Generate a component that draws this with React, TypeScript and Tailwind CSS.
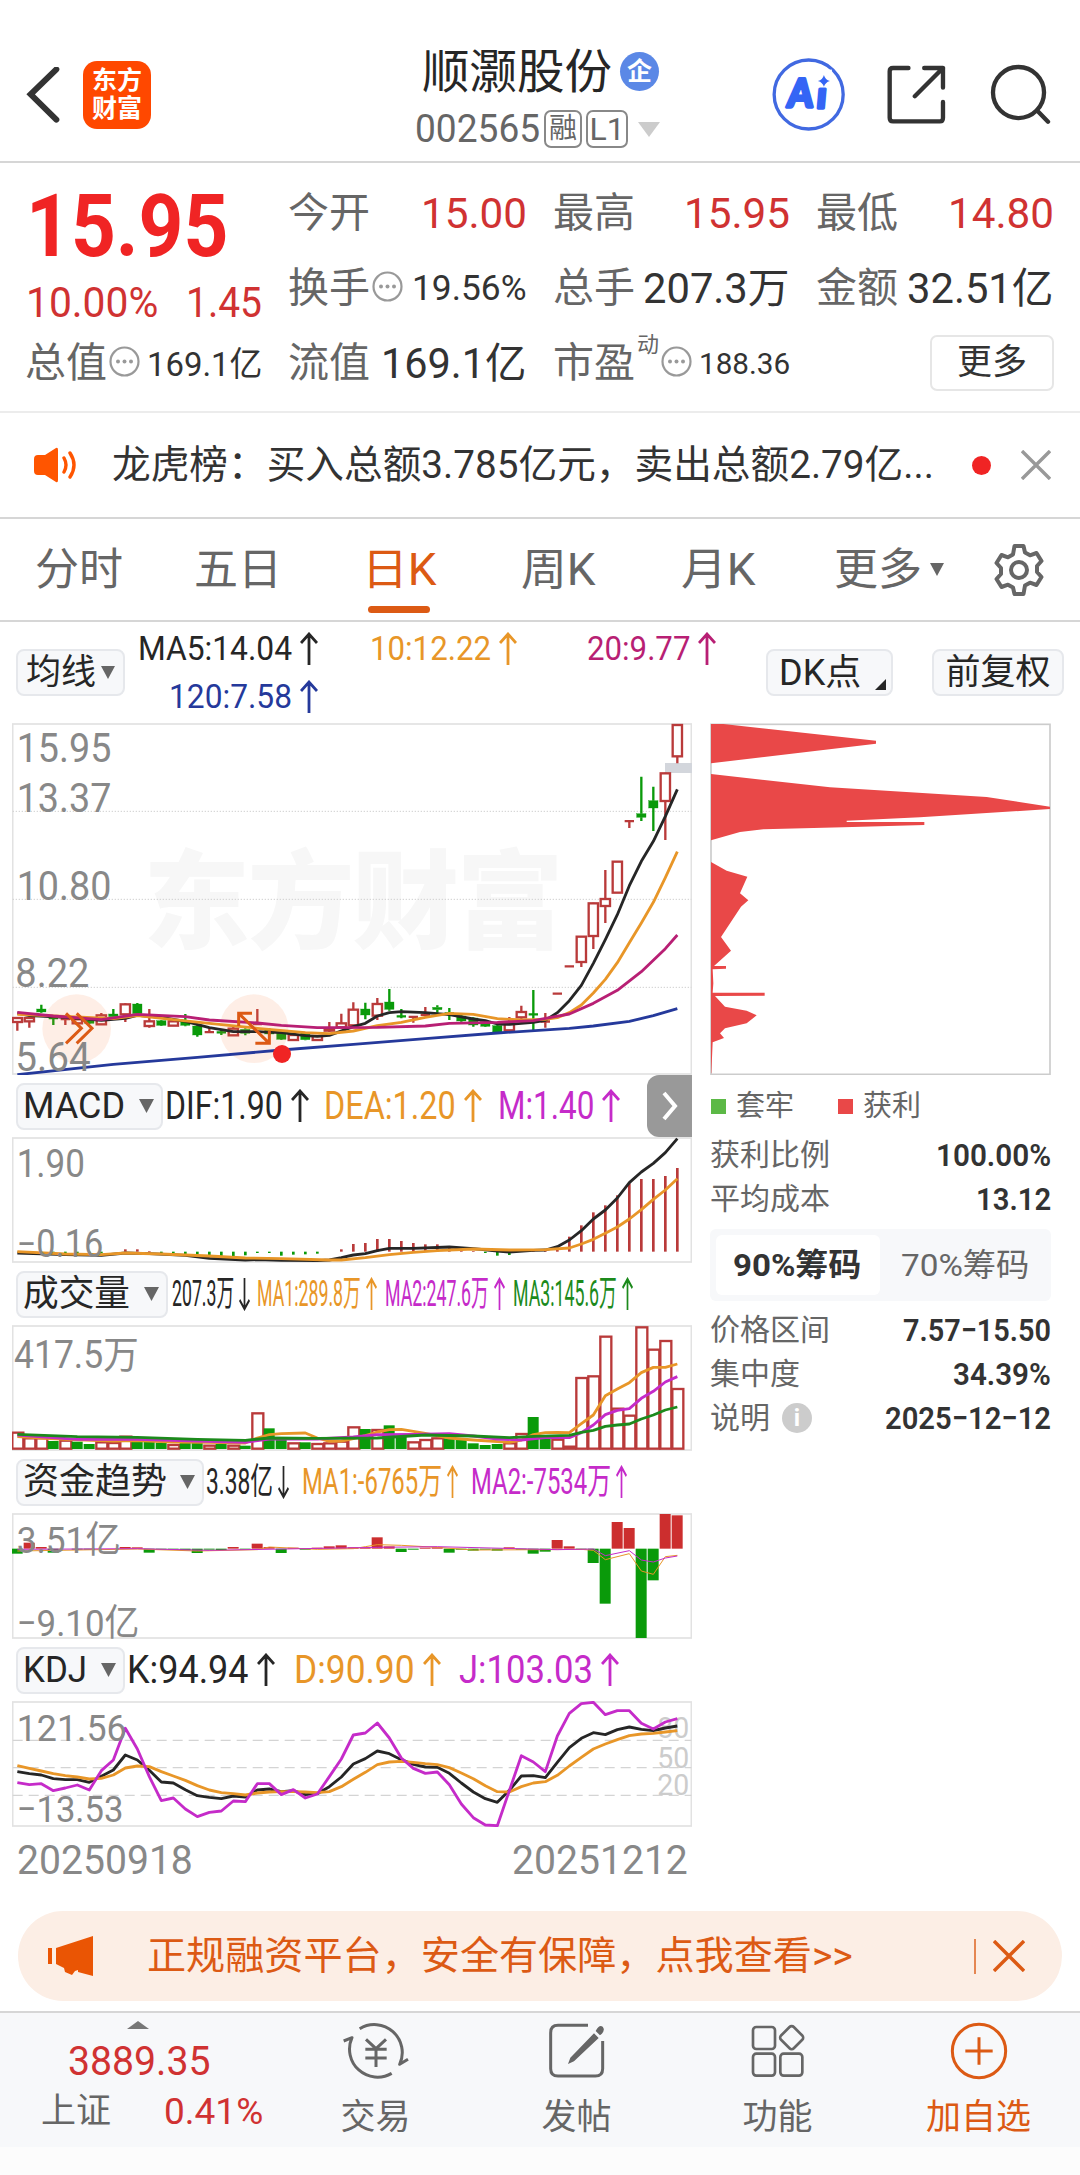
import { useLayoutEffect, useRef, useState } from "react";
import type { ReactNode } from "react";

const RED = "#b93a3a";
const GREEN = "#0a9a0a";
const BLACK = "#262626";
const ORANGE = "#e89628";
const PURPLE = "#c52bc9";
const MAGENTA = "#b81f74";
const BLUE = "#25399b";

const FONT = "Roboto, 'Noto Sans CJK SC', sans-serif";

// every chart uses 3 units per pixel, one bar every 36 units
const STEP = 36;
const X0 = 52;
const barX = (i: number) => X0 + i * STEP;

type Point = [number, number];

// [up, bodyTop, bodyBottom, wickTop, wickBottom]
type Candle = [boolean, number, number, number, number];

const CANDLES: Candle[] = [
  [true, 924, 936, 922, 962],
  [true, 924, 934, 922, 953],
  [false, 897, 906, 884, 908],
  [false, 922, 926, 915, 945],
  [true, 925, 929, 915, 945],
  [true, 928, 940, 925, 943],
  [false, 932, 940, 930, 942],
  [true, 916, 943, 909, 944],
  [false, 912, 920, 897, 925],
  [true, 883, 913, 880, 936],
  [false, 882, 911, 879, 912],
  [true, 934, 948, 897, 953],
  [false, 932, 946, 930, 948],
  [true, 934, 947, 932, 948],
  [false, 936, 946, 912, 949],
  [false, 948, 975, 946, 980],
  [true, 965, 968, 955, 968],
  [false, 965, 969, 958, 975],
  [true, 956, 976, 950, 978],
  [false, 958, 970, 955, 976],
  [true, 940, 945, 897, 946],
  [false, 958, 972, 955, 974],
  [false, 966, 988, 964, 990],
  [true, 975, 990, 972, 992],
  [false, 968, 989, 966, 991],
  [true, 978, 990, 976, 992],
  [true, 955, 962, 936, 966],
  [true, 940, 952, 911, 954],
  [true, 899, 946, 877, 948],
  [false, 897, 915, 878, 928],
  [true, 882, 917, 864, 930],
  [false, 876, 898, 837, 902],
  [false, 917, 921, 897, 925],
  [true, 919, 922, 917, 938],
  [true, 912, 917, 891, 919],
  [false, 892, 899, 886, 908],
  [false, 908, 913, 894, 930],
  [false, 918, 933, 914, 935],
  [false, 924, 945, 922, 950],
  [false, 935, 949, 933, 951],
  [false, 947, 966, 943, 968],
  [true, 942, 961, 921, 962],
  [true, 906, 922, 887, 935],
  [false, 912, 914, 840, 962],
  [true, 933, 936, 909, 953],
  [true, 850, 852, 849, 853],
  [true, 768, 770, 767, 771],
  [true, 680, 756, 678, 771],
  [true, 580, 678, 578, 717],
  [true, 567, 588, 480, 639],
  [true, 455, 548, 454, 549],
  [true, 332, 335, 332, 354],
  [false, 311, 322, 200, 333],
  [false, 272, 294, 230, 363],
  [true, 190, 273, 188, 390],
  [true, 45, 139, 43, 160],
];

const MA5: Point[] = [[0, 909], [1, 917], [4, 922], [7, 931], [9, 925], [10, 916], [12, 922], [14, 934], [16, 953], [18, 965], [20, 965], [22, 968], [24, 977], [25, 979], [26, 976], [28, 950], [29, 940], [30, 918], [31, 908], [32, 905], [34, 908], [36, 914], [38, 927], [39, 932], [40, 942], [41, 943], [43, 937], [44, 931], [45, 908], [46, 872], [47, 826], [48, 760], [49, 689], [50, 614], [51, 527], [52, 454], [53, 394], [54, 319], [55, 238]];
const MA10: Point[] = [[0, 913], [4, 919], [8, 926], [10, 917], [13, 929], [16, 940], [20, 955], [24, 968], [26, 971], [28, 963], [30, 947], [32, 937], [34, 922], [36, 910], [38, 913], [40, 926], [42, 930], [44, 928], [45, 923], [46, 908], [47, 885], [48, 849], [49, 808], [50, 758], [51, 698], [52, 639], [53, 577], [54, 503], [55, 425]];
const MA20: Point[] = [[0, 907], [3, 918], [7, 929], [10, 913], [14, 920], [16, 930], [20, 939], [22, 946], [25, 953], [30, 952], [34, 948], [36, 940], [40, 937], [43, 932], [46, 912], [48, 880], [50, 841], [52, 785], [54, 716], [55, 675]];
const MA120: Point[] = [[0, 1094], [8, 1063], [15, 1042], [22, 1020], [28, 1003], [34, 986], [40, 969], [46, 955], [48, 948], [51, 934], [53, 917], [55, 896]];

const MACD_ZERO = 545;
const MACD_BARS: Point[] = [[1, 550], [3, 552], [4, 553], [5, 553], [6, 553], [7, 550], [9, 538], [10, 538], [11, 543], [12, 549], [13, 550], [14, 553], [15, 560], [16, 558], [17, 558], [18, 560], [19, 556], [20, 549], [21, 549], [22, 557], [23, 554], [24, 553], [25, 551], [27, 538], [28, 522], [29, 519], [30, 507], [31, 507], [32, 513], [33, 519], [34, 523], [35, 523], [36, 529], [37, 532], [38, 543], [39, 549], [40, 557], [41, 555], [42, 543], [43, 540], [44, 538], [45, 530], [46, 500], [47, 466], [48, 427], [49, 406], [50, 376], [51, 340], [52, 327], [53, 327], [54, 318], [55, 294]];
const DIF: Point[] = [[0, 549], [4, 554], [7, 556], [9, 549], [11, 551], [14, 556], [16, 565], [19, 570], [20, 569], [22, 571], [25, 572], [26, 570], [27, 563], [28, 555], [29, 551], [30, 542], [31, 535], [33, 535], [36, 531], [38, 536], [40, 543], [41, 546], [43, 541], [44, 540], [45, 530], [46, 510], [47, 482], [48, 447], [49, 420], [50, 384], [51, 338], [52, 306], [53, 280], [54, 248], [55, 206]];
const DEA: Point[] = [[0, 545], [4, 552], [7, 554], [9, 549], [12, 552], [16, 558], [19, 564], [22, 566], [26, 570], [27, 570], [29, 563], [31, 554], [33, 547], [35, 542], [38, 537], [41, 540], [44, 539], [46, 534], [47, 522], [48, 508], [49, 490], [50, 471], [51, 447], [52, 419], [53, 388], [54, 360], [55, 326]];

const VOL_BASE = 1137;
const VOL_TOPS = [1086, 1103, 1103, 1113, 1110, 1115, 1122, 1115, 1117, 1098, 1107, 1110, 1118, 1123, 1117, 1118, 1125, 1122, 1125, 1127, 1028, 1075, 1105, 1118, 1117, 1120, 1118, 1113, 1070, 1077, 1078, 1066, 1098, 1115, 1108, 1103, 1105, 1110, 1120, 1125, 1122, 1118, 1090, 1041, 1098, 1107, 1128, 922, 917, 798, 1014, 1035, 770, 837, 811, 955];
const VOL_DOWN = new Set([3, 5, 6, 10, 11, 12, 14, 15, 17, 19, 21, 22, 24, 29, 31, 32, 36, 37, 38, 39, 40, 43, 44]);
const VMA1: Point[] = [[0, 1100], [2, 1104], [4, 1108], [8, 1113], [10, 1112], [13, 1116], [16, 1117], [19, 1119], [20, 1104], [21, 1094], [22, 1091], [24, 1089], [25, 1104], [26, 1114], [27, 1113], [28, 1106], [29, 1097], [30, 1086], [31, 1079], [32, 1078], [33, 1084], [34, 1090], [36, 1104], [38, 1110], [41, 1117], [42, 1110], [43, 1094], [44, 1088], [45, 1087], [46, 1088], [47, 1061], [48, 1035], [49, 977], [50, 957], [51, 938], [52, 908], [53, 892], [54, 892], [55, 882]];
const VMA2: Point[] = [[0, 1095], [5, 1108], [10, 1108], [15, 1113], [19, 1117], [21, 1107], [25, 1107], [28, 1101], [30, 1094], [33, 1093], [36, 1091], [38, 1098], [40, 1107], [42, 1110], [44, 1103], [46, 1103], [47, 1088], [48, 1065], [49, 1034], [50, 1021], [51, 1016], [52, 985], [53, 964], [54, 936], [55, 920]];
const VMA3: Point[] = [[0, 1093], [5, 1100], [10, 1102], [15, 1108], [19, 1111], [21, 1104], [25, 1105], [30, 1104], [34, 1095], [38, 1098], [41, 1103], [43, 1099], [46, 1096], [47, 1087], [48, 1081], [49, 1069], [50, 1065], [51, 1062], [52, 1047], [53, 1035], [54, 1020], [55, 1011]];

const FUND_ZERO = 296;
const FUND_BARS: Point[] = [[0, 311], [1, 278], [2, 291], [3, 308], [5, 299], [6, 299], [9, 291], [10, 292], [11, 308], [12, 299], [13, 299], [14, 301], [15, 309], [16, 299], [17, 300], [18, 291], [19, 299], [20, 281], [21, 291], [22, 309], [23, 293], [24, 299], [25, 293], [26, 289], [27, 286], [28, 292], [29, 293], [30, 262], [31, 289], [32, 306], [33, 299], [34, 293], [35, 292], [36, 308], [37, 299], [38, 302], [39, 299], [40, 302], [41, 292], [42, 299], [43, 311], [44, 305], [45, 270], [46, 289], [47, 299], [48, 339], [49, 461], [50, 216], [51, 234], [52, 564], [53, 391], [54, 192], [55, 196]];
const FMA1: Point[] = [[0, 303], [5, 300], [10, 297], [15, 303], [20, 299], [21, 291], [25, 298], [28, 296], [29, 290], [30, 284], [32, 286], [35, 292], [38, 300], [44, 299], [47, 298], [48, 301], [49, 329], [51, 311], [52, 363], [53, 373], [54, 320], [55, 316]];
const FMA2: Point[] = [[0, 298], [10, 296], [16, 301], [30, 292], [35, 290], [45, 299], [48, 297], [49, 317], [51, 302], [52, 330], [53, 336], [54, 324], [55, 318]];

const K_LINE = [965, 971, 975, 986, 989, 989, 997, 979, 960, 915, 930, 961, 996, 999, 1019, 1037, 1042, 1046, 1038, 1041, 1020, 1017, 1025, 1022, 1034, 1031, 1010, 981, 942, 926, 903, 911, 929, 943, 951, 952, 970, 999, 1026, 1046, 1057, 1021, 978, 977, 983, 937, 893, 865, 848, 854, 839, 831, 838, 842, 834, 828];
const D_LINE = [947, 955, 963, 971, 977, 981, 987, 985, 975, 954, 948, 950, 965, 978, 991, 1007, 1020, 1028, 1031, 1035, 1029, 1026, 1025, 1025, 1026, 1028, 1025, 1010, 988, 967, 944, 936, 934, 937, 941, 944, 953, 969, 986, 1007, 1025, 1026, 1010, 999, 995, 976, 948, 922, 897, 882, 869, 857, 852, 850, 846, 842];
const J_LINE = [998, 1004, 1001, 1022, 1014, 1005, 1020, 962, 930, 835, 897, 980, 1052, 1044, 1077, 1100, 1087, 1083, 1053, 1055, 1001, 1001, 1034, 1019, 1044, 1032, 980, 927, 855, 849, 819, 864, 924, 955, 970, 966, 1004, 1062, 1103, 1125, 1127, 1022, 917, 936, 965, 858, 790, 761, 757, 794, 782, 782, 820, 837, 816, 806];

const CHIPS = [
  "33,72 70,72 528,122 528,131 33,190",
  "33,222 390,262 860,291 1050,320 1050,327 660,352 440,362 440,366 673,366 673,375 430,382 190,388 120,396 33,421",
  "33,486 80,512 142,530 120,580 145,601 123,620 63,711 93,752 42,798 78,798 78,806 38,808 40,850 38,878 194,878 194,887 45,888 75,920 140,932 170,946 140,970 75,985 60,1000 72,1014 38,1027 34,1120 33,1120",
];

const indexed = (ys: number[]): Point[] => ys.map((y, i) => [i, y]);

// Squeezes or stretches one line of text to a given width
function Fit({ w, className = "", children }: { w: number; className?: string; children: ReactNode }) {
  const ref = useRef<HTMLSpanElement>(null);
  const [scale, setScale] = useState(1);
  useLayoutEffect(() => {
    if (ref.current) setScale(w / ref.current.offsetWidth);
  }, [w, children]);
  return (
    <span className={`inline-block shrink-0 whitespace-nowrap ${className}`} style={{ width: w }}>
      <span ref={ref} className="inline-block origin-left" style={{ transform: `scaleX(${scale})` }}>
        {children}
      </span>
    </span>
  );
}

function Arrow({ down = false, narrow = false }: { down?: boolean; narrow?: boolean }) {
  return (
    <svg
      className={`shrink-0 ${narrow ? "w-[11px]" : "w-[18px]"} h-[34px] ${down ? "rotate-180" : ""}`}
      viewBox="0 0 18 34"
      preserveAspectRatio="none"
      fill="none"
      stroke="currentColor"
      strokeWidth="2.8"
    >
      <path d="M9 33V2M1 11L9 2l8 9" />
    </svg>
  );
}

function Caret({ className = "" }: { className?: string }) {
  return (
    <svg className={`shrink-0 ${className}`} viewBox="0 0 10 9" preserveAspectRatio="none" fill="currentColor">
      <path d="M0 0h10L5 9z" />
    </svg>
  );
}

function Line({ points, color, width = 8.5 }: { points: Point[]; color: string; width?: number }) {
  return (
    <polyline
      points={points.map(([i, y]) => `${barX(i)},${y}`).join(" ")}
      fill="none"
      stroke={color}
      strokeWidth={width}
      strokeLinejoin="round"
    />
  );
}

function Label({ x = 50, y, w, color = "#888888", size = 120, children }: { x?: number; y: number; w: number; color?: string; size?: number; children: string }) {
  return (
    <text x={x} y={y} fill={color} fontSize={size} textLength={w} lengthAdjust="spacingAndGlyphs" fontFamily={FONT}>
      {children}
    </text>
  );
}

function SubChart({ top, children }: { top: number; children: ReactNode }) {
  return (
    <svg className="block w-[680px] h-[126px]" viewBox={`36 ${top - 3} 2040 378`}>
      <rect x={38} y={top} width={2036} height={372} fill="none" stroke="#e2e2e2" strokeWidth={5} />
      {children}
    </svg>
  );
}

function Picker({ label, w, className }: { label: string; w: number; className: string }) {
  return (
    <button className={`flex h-[47px] shrink-0 items-center justify-between rounded-lg border-2 border-[#e6e8ec] bg-[#f7f8fa] pl-[5px] pr-[7px] text-[36px] leading-none text-[#262626] ${className}`}>
      <Fit w={w}>{label}</Fit>
      <Caret className="h-[14px] w-[15px] text-[#666666]" />
    </button>
  );
}

function Value({ text, w, color, down, narrow, className = "" }: { text: string; w: number; color: string; down?: boolean; narrow?: boolean; className?: string }) {
  return (
    <span className={`flex shrink-0 items-center ${narrow ? "gap-[5px]" : "gap-[8px]"} ${className}`} style={{ color }}>
      <Fit w={w}>{text}</Fit>
      <Arrow down={down} narrow={narrow} />
    </span>
  );
}

function Dots() {
  return (
    <svg className="mb-[5px] ml-[2px] h-[31px] w-[31px] shrink-0" viewBox="0 0 31 31" fill="#999999">
      <circle cx="15.5" cy="15.5" r="14" fill="none" stroke="#999999" strokeWidth="2.2" />
      <circle cx="9" cy="15.5" r="2" />
      <circle cx="15.5" cy="15.5" r="2" />
      <circle cx="22" cy="15.5" r="2" />
    </svg>
  );
}

function Header() {
  return (
    <header className="flex h-[163px] items-center border-b-2 border-[#d6d6d6] pl-[26px] pt-[28px]">
      <svg className="h-[56px] w-[34px]" viewBox="48 84 102 168" fill="none" stroke="#333333" strokeWidth="18">
        <path d="M139 91L62 166l77 76" strokeLinecap="round" strokeLinejoin="miter" />
      </svg>
      <div className="ml-[23px] flex h-[68px] w-[68px] flex-col items-center justify-center rounded-[14px] bg-[#ff4800] text-[25px] font-bold leading-[28px] text-white">
        <span>东方</span>
        <span>财富</span>
      </div>
      <div className="ml-[264px] flex w-[248px] flex-col pt-[4px]">
        <div className="flex h-[52px] items-center pl-[7px] text-[47px] leading-none text-[#262626]">
          <Fit w={190}>顺灏股份</Fit>
          <span className="ml-[8px] flex h-[39px] w-[39px] items-center justify-center rounded-full bg-[#5b88e6] text-[25px] font-bold text-white">企</span>
        </div>
        <div className="mt-[13px] flex h-[38px] items-center text-[38px] leading-none text-[#666666]">
          <Fit w={125}>002565</Fit>
          <span className="ml-[4px] flex h-[38px] w-[38px] items-center justify-center rounded-[7px] border-2 border-[#888888] text-[28px]">融</span>
          <span className="ml-[4px] flex h-[38px] w-[42px] items-center justify-center rounded-[7px] border-2 border-[#888888] text-[32px]">L1</span>
          <Caret className="ml-[10px] h-[15px] w-[22px] text-[#cccccc]" />
        </div>
      </div>
      <svg className="ml-[109px] h-[73px] w-[73px]" viewBox="36 55 219 220">
        <circle cx="146" cy="165" r="104" fill="none" stroke="#4169e1" strokeWidth="10" />
        <g fill="#3465f5" stroke="#3465f5" strokeWidth="10" strokeLinejoin="round" transform="skewX(-5)" fontFamily="Lato, sans-serif" fontWeight="900">
          <text x="98" y="203" fontSize="118" textLength="76" lengthAdjust="spacingAndGlyphs">A</text>
          <text x="186" y="207" fontSize="110">i</text>
        </g>
        <path d="M168 90h48v54h-48z" fill="#ffffff" />
        <path d="M192 106q4 15 18 18q-14 4-18 18q-4-14-18-18q14-3 18-18z" fill="#3465f5" />
      </svg>
      <svg className="ml-[42px] h-[59px] w-[59px]" viewBox="382 78 176 176" fill="none" stroke="#333333" strokeWidth="13" strokeLinecap="round" strokeLinejoin="round">
        <path d="M446 87h-46q-10 0-10 10v138q0 11 10 11h140q9 0 9-11v-47M493 87h56v58M549 87L465 171" />
      </svg>
      <svg className="ml-[44px] h-[61px] w-[61px]" viewBox="690 72 184 184" fill="none" stroke="#333333" strokeWidth="13" strokeLinecap="round">
        <circle cx="776" cy="158" r="77" />
        <path d="M832 212l33 34" />
      </svg>
    </header>
  );
}

function Quote() {
  return (
    <section className="grid h-[250px] grid-cols-[236px_239px_237px_238px] grid-rows-[75px_75px_75px] gap-x-[26px] border-b-2 border-[#ececec] pl-[26px] pt-[13px] text-[42px] leading-none text-[#333333]">
      <div className="row-span-2">
        <div className="flex h-[100px] items-center text-[88px] font-bold text-[#f02424]">
          <Fit w={202}>15.95</Fit>
        </div>
        <div className="flex h-[54px] items-center justify-between text-[#d03232]">
          <Fit w={132}>10.00%</Fit>
          <Fit w={76}>1.45</Fit>
        </div>
      </div>
      <div className="flex items-center justify-between">
        <span className="text-[41px] text-[#666666]">今开</span>
        <Fit w={106} className="text-[43px] text-[#d03232]">15.00</Fit>
      </div>
      <div className="flex items-center justify-between">
        <span className="text-[41px] text-[#666666]">最高</span>
        <Fit w={106} className="text-[43px] text-[#d03232]">15.95</Fit>
      </div>
      <div className="flex items-center justify-between">
        <span className="text-[41px] text-[#666666]">最低</span>
        <Fit w={106} className="text-[43px] text-[#d03232]">14.80</Fit>
      </div>
      <div className="flex items-center">
        <span className="text-[41px] text-[#666666]">换手</span>
        <Dots />
        <Fit w={115} className="ml-auto text-[35px]">19.56%</Fit>
      </div>
      <div className="flex items-center justify-between">
        <span className="text-[41px] text-[#666666]">总手</span>
        <Fit w={147}>207.3万</Fit>
      </div>
      <div className="flex items-center justify-between">
        <span className="text-[41px] text-[#666666]">金额</span>
        <Fit w={147}>32.51亿</Fit>
      </div>
      <div className="flex items-center">
        <span className="-ml-px text-[41px] text-[#666666]">总值</span>
        <Dots />
        <Fit w={115} className="ml-auto text-[34px]">169.1亿</Fit>
      </div>
      <div className="flex items-center justify-between">
        <span className="text-[41px] text-[#666666]">流值</span>
        <Fit w={146}>169.1亿</Fit>
      </div>
      <div className="flex items-center">
        <span className="text-[41px] text-[#666666]">市盈</span>
        <span className="mb-[38px] w-[24px] pl-[2px] text-[22px] text-[#666666]">动</span>
        <Dots />
        <Fit w={91} className="ml-auto text-[30px]">188.36</Fit>
      </div>
      <div className="flex items-center justify-end">
        <button className="mb-[2px] h-[56px] w-[124px] rounded-[7px] border-2 border-[#e6e6e6] text-[35px] leading-none">更多</button>
      </div>
    </section>
  );
}

function Notice() {
  return (
    <section className="flex h-[106px] items-center border-b-2 border-[#d6d6d6] pl-[34px] text-[39px] leading-none text-[#333333]">
      <svg className="h-[36px] w-[44px]" viewBox="0 0 44 36" fill="none" stroke="#ff5500" strokeWidth="3.4" strokeLinecap="round">
        <path d="M4 8h7L22 1q2-1 2 2v30q0 3-2 2L11 28H4q-4 0-4-4V12q0-4 4-4z" fill="#ff5500" stroke="none" />
        <path d="M30 11q4 7 0 14M36 6q8 12 0 24" />
      </svg>
      <Fit w={822} className="ml-[34px]">龙虎榜：买入总额3.785亿元，卖出总额2.79亿...</Fit>
      <span className="ml-[38px] h-[19px] w-[19px] rounded-full bg-[#f02424]" />
      <svg className="ml-[30px] h-[30px] w-[30px]" viewBox="0 0 30 30" stroke="#999999" strokeWidth="3.4">
        <path d="M1 1l28 28M29 1L1 29" />
      </svg>
    </section>
  );
}

function Tabs() {
  return (
    <nav className="flex h-[103px] items-center border-b-2 border-[#d6d6d6] pl-[35px] text-[44px] leading-none text-[#666666]">
      <Fit w={88}>分时</Fit>
      <Fit w={88} className="ml-[71px]">五日</Fit>
      <span className="relative ml-[80px] w-[75px] text-[#dc5a14]">
        <Fit w={75}>日K</Fit>
        <span className="absolute -bottom-[21px] left-[6px] h-[7px] w-[62px] rounded-full bg-[#dc5a14]" />
      </span>
      <Fit w={75} className="ml-[84px]">周K</Fit>
      <Fit w={75} className="ml-[85px]">月K</Fit>
      <Fit w={88} className="ml-[78px]">更多</Fit>
      <Caret className="ml-[8px] h-[13px] w-[14px]" />
      <svg className="ml-[49px] h-[52px] w-[52px]" viewBox="0 0 52 52" fill="none" stroke="#666666" strokeWidth="4" strokeLinejoin="round">
        <path d="M21.5 2h9l1.5 6.5 5 2.8 6.500-2.300 5 8-4.500 5v6l4.500 5-5 8-6.500-2.300-5 2.800L30.500 50h-9L20 43.500l-5-2.800L8.500 43l-5-8L8 30v-6l-4.500-5 5-8 6.500 2.300 5-2.800z" />
        <circle cx="26" cy="26" r="8" />
      </svg>
    </nav>
  );
}

function MaBar() {
  return (
    <div className="flex h-[101px] items-center pl-[16px] text-[33px] leading-none">
      <button className="flex h-[47px] w-[109px] items-center justify-center gap-[5px] rounded-lg border-2 border-[#e6e8ec] bg-[#f7f8fa] text-[35px] leading-none text-[#262626]">
        均线
        <Caret className="h-[13px] w-[14px] text-[#666666]" />
      </button>
      <div className="ml-[13px] flex h-[96px] w-[628px] flex-col">
        <div className="flex h-[48px] items-center">
          <Value text="MA5:14.04" w={154} color={BLACK} />
          <Value text="10:12.22" w={121} color={ORANGE} className="ml-[52px]" />
          <Value text="20:9.77" w={103} color={MAGENTA} className="ml-[70px]" />
        </div>
        <div className="flex h-[48px] items-center pl-[31px]">
          <Value text="120:7.58" w={123} color={BLUE} />
        </div>
      </div>
      <button className="relative h-[47px] w-[127px] rounded-lg border-2 border-[#e6e8ec] bg-[#f7f8fa] pl-[11px] text-left text-[36px] leading-none text-[#262626]">
        DK点
        <svg className="absolute bottom-[4px] right-[5px] h-[11px] w-[11px]" viewBox="0 0 11 11">
          <path d="M11 0v11H0z" fill="#262626" />
        </svg>
      </button>
      <button className="ml-[39px] h-[47px] w-[132px] rounded-lg border-2 border-[#e6e8ec] bg-[#f7f8fa] text-[35px] leading-none text-[#262626]">前复权</button>
    </div>
  );
}

function PriceChart() {
  return (
    <svg className="block h-[352px] w-[680px]" viewBox="36 39 2040 1056">
      <text x={430} y={690} fill="#f7f7f7" fontSize={320} fontWeight={900} textLength={1260} fontFamily="'Noto Sans CJK SC', sans-serif">
        东方财富
      </text>
      <rect x={38} y={42} width={2036} height={1050} fill="none" stroke="#e2e2e2" strokeWidth={5} />
      {[304, 568, 832].map((y) => (
        <path key={y} d={`M38 ${y}H2074`} stroke="#cfcfcf" strokeWidth={3} strokeDasharray="4 5" />
      ))}
      <rect x={1995} y={159} width={81} height={30} fill="#d3d6dc" />
      {CANDLES.map(([up, top, bottom, high, low], i) => {
        const x = barX(i);
        const color = up ? RED : GREEN;
        if (bottom - top < 6) {
          return (
            <path key={i} d={`M${x - 14} ${(top + bottom) / 2}h28M${x} ${high}V${low}`} stroke={color} strokeWidth={7} />
          );
        }
        return (
          <g key={i} stroke={color} strokeWidth={7}>
            <path d={`M${x} ${high}V${top}M${x} ${bottom}V${low}`} />
            <rect x={x - 14} y={top} width={28} height={bottom - top} fill={up ? "#ffffff" : color} strokeWidth={up ? 7 : 1} />
          </g>
        );
      })}
      <circle cx={230} cy={956} r={103} fill="#f97f40" fillOpacity={0.13} />
      <circle cx={762} cy={956} r={103} fill="#f97f40" fillOpacity={0.13} />
      <Line points={MA5} color={BLACK} />
      <Line points={MA10} color={ORANGE} />
      <Line points={MA20} color={MAGENTA} />
      <Line points={MA120} color={BLUE} />
      <g fill="none" stroke="#dc5a14" strokeWidth={9}>
        <path d="M198 910l46 45-46 45M230 910l46 45-46 45" />
        <path d="M716 948v-38h40M716 910l92 90M808 962v38h-42" />
      </g>
      <circle cx={846} cy={1032} r={27} fill="#f02424" />
      <Label y={157} w={284}>15.95</Label>
      <Label y={306} w={284}>13.37</Label>
      <Label y={570} w={284}>10.80</Label>
      <Label x={46} y={830} w={222}>8.22</Label>
      <Label x={46} y={1082} w={226}>5.64</Label>
    </svg>
  );
}

function MacdChart() {
  return (
    <SubChart top={204}>
      {MACD_BARS.map(([i, y]) => (
        <path key={i} d={`M${barX(i)} ${MACD_ZERO}V${y}`} stroke={y < MACD_ZERO ? RED : GREEN} strokeWidth={8} />
      ))}
      <Line points={DIF} color={BLACK} />
      <Line points={DEA} color={ORANGE} />
      <Label y={320} w={205} size={114}>1.90</Label>
      <Label y={562} w={260} size={114}>−0.16</Label>
    </SubChart>
  );
}

function VolumeChart() {
  return (
    <SubChart top={768}>
      {VOL_TOPS.map((y, i) =>
        VOL_DOWN.has(i) ? (
          <rect key={i} x={barX(i) - 17} y={y} width={33} height={VOL_BASE - y} fill={GREEN} />
        ) : (
          <rect key={i} x={barX(i) - 15} y={y + 2} width={33} height={VOL_BASE - y - 3} fill="#ffffff" stroke={RED} strokeWidth={7} />
        ),
      )}
      <Line points={VMA1} color={ORANGE} />
      <Line points={VMA2} color={PURPLE} />
      <Line points={VMA3} color="#1c8a1c" />
      <Label x={42} y={895} w={374} size={114}>417.5万</Label>
    </SubChart>
  );
}

function FundChart() {
  return (
    <SubChart top={192}>
      {FUND_BARS.map(([i, y]) => (
        <rect
          key={i}
          x={barX(i) - 17}
          y={Math.min(y, FUND_ZERO)}
          width={33}
          height={Math.abs(y - FUND_ZERO)}
          fill={y < FUND_ZERO ? "#cc2e2e" : GREEN}
        />
      ))}
      <Line points={FMA1} color={ORANGE} width={3} />
      <Line points={FMA2} color={PURPLE} width={3} />
      <Label y={308} w={312} size={112}>3.51亿</Label>
      <Label y={557} w={368} size={112}>−9.10亿</Label>
    </SubChart>
  );
}

function KdjChart() {
  return (
    <SubChart top={756}>
      {[871, 953, 1036].map((y) => (
        <path key={y} d={`M38 ${y}H2074`} stroke="#d4d4d4" strokeWidth={4} strokeDasharray="30 18" />
      ))}
      <Label x={1972} y={865} w={96} size={90} color="#cccccc">80</Label>
      <Label x={1972} y={953} w={96} size={90} color="#cccccc">50</Label>
      <Label x={1972} y={1034} w={96} size={90} color="#cccccc">20</Label>
      <Line points={indexed(K_LINE)} color={BLACK} />
      <Line points={indexed(D_LINE)} color={ORANGE} />
      <Line points={indexed(J_LINE)} color={PURPLE} />
      <Label y={873} w={330} size={112}>121.56</Label>
      <Label y={1115} w={320} size={112}>−13.53</Label>
    </SubChart>
  );
}

function Charts() {
  return (
    <div className="w-[680px] text-[38px] leading-none">
      <PriceChart />
      <div className="flex h-[62px] items-center pl-[4px]">
        <Picker label="MACD" w={102} className="w-[147px]" />
        <Value text="DIF:1.90" w={118} color={BLACK} className="ml-[2px]" />
        <Value text="DEA:1.20" w={132} color={ORANGE} className="ml-[15px]" />
        <Value text="M:1.40" w={96} color={PURPLE} className="ml-[16px]" />
        <button className="ml-auto flex h-[62px] w-[45px] items-center justify-center rounded-l-xl bg-[#999999]">
          <svg className="h-[30px] w-[18px]" viewBox="0 0 18 30" fill="none" stroke="#ffffff" strokeWidth="4">
            <path d="M3 2l11 13L3 28" />
          </svg>
        </button>
      </div>
      <MacdChart />
      <div className="flex h-[62px] items-center pl-[4px] text-[36px]">
        <Picker label="成交量" w={107} className="w-[152px]" />
        <Value text="207.3万" w={62} color={BLACK} down narrow className="ml-[4px]" />
        <Value text="MA1:289.8万" w={104} color={ORANGE} narrow className="ml-[7px]" />
        <Value text="MA2:247.6万" w={104} color={PURPLE} narrow className="ml-[8px]" />
        <Value text="MA3:145.6万" w={104} color="#1c8a1c" narrow className="ml-[8px]" />
      </div>
      <VolumeChart />
      <div className="flex h-[62px] items-center pl-[4px] text-[36px]">
        <Picker label="资金趋势" w={144} className="w-[188px]" />
        <Value text="3.38亿" w={67} color={BLACK} down narrow className="ml-[2px]" />
        <Value text="MA1:-6765万" w={140} color={ORANGE} narrow className="ml-[13px]" />
        <Value text="MA2:-7534万" w={140} color={PURPLE} narrow className="ml-[13px]" />
      </div>
      <FundChart />
      <div className="flex h-[62px] items-center pl-[4px]">
        <Picker label="KDJ" w={64} className="w-[109px]" />
        <Value text="K:94.94" w={122} color={BLACK} className="ml-[2px]" />
        <Value text="D:90.90" w={121} color={ORANGE} className="ml-[19px]" />
        <Value text="J:103.03" w={134} color={PURPLE} className="ml-[18px]" />
      </div>
      <KdjChart />
      <div className="flex h-[68px] items-center justify-between pl-[5px] pr-[4px] text-[40px] text-[#888888]">
        <Fit w={176}>20250918</Fit>
        <Fit w={176}>20251212</Fit>
      </div>
    </div>
  );
}

function ChipRow({ label, value, w, info = false }: { label: string; value: string; w: number; info?: boolean }) {
  return (
    <div className="flex h-[44px] items-center">
      <span className="text-[30px] text-[#666666]">{label}</span>
      {info && (
        <span className="ml-[12px] flex h-[30px] w-[30px] items-center justify-center rounded-full bg-[#cccccc] text-[24px] font-bold text-white">i</span>
      )}
      <Fit w={w} className="ml-auto text-[32px] font-semibold text-[#333333]">{value}</Fit>
    </div>
  );
}

function ChipPanel() {
  return (
    <aside className="ml-[18px] w-[341px] leading-none">
      <svg className="block h-[352px] w-[341px]" viewBox="30 69 1023 1056">
        <rect x={33} y={73} width={1017} height={1050} fill="none" stroke="#cccccc" strokeWidth={5} />
        {CHIPS.map((points) => (
          <polygon key={points} points={points} fill="#e94848" />
        ))}
      </svg>
      <div className="flex h-[58px] items-center pl-[1px] pt-[4px] text-[29px] text-[#666666]">
        <span className="mr-[10px] h-[15px] w-[15px] bg-[#5cb946]" />
        套牢
        <span className="ml-[44px] mr-[10px] h-[15px] w-[15px] bg-[#e94848]" />
        获利
      </div>
      <ChipRow label="获利比例" value="100.00%" w={115} />
      <ChipRow label="平均成本" value="13.12" w={75} />
      <div className="mb-[7px] mt-[8px] flex h-[72px] items-center rounded-[6px] bg-[#f7f8fa] px-[6px] text-[32px]">
        <span className="flex h-[60px] w-[164px] items-center justify-center rounded-[6px] bg-white pr-[3px] font-bold text-[#333333]">
          <Fit w={128}>90%筹码</Fit>
        </span>
        <span className="flex h-[60px] w-[165px] items-center justify-center pl-[4px] text-[#666666]">
          <Fit w={128}>70%筹码</Fit>
        </span>
      </div>
      <ChipRow label="价格区间" value="7.57−15.50" w={148} />
      <ChipRow label="集中度" value="34.39%" w={98} />
      <ChipRow label="说明" value="2025−12−12" w={166} info />
    </aside>
  );
}

function Banner() {
  return (
    <section className="mx-[18px] mt-[16px] flex h-[90px] items-center rounded-[45px] bg-[#fceee5] pl-[30px] text-[39px] leading-none text-[#dc5a14]">
      <svg className="h-[40px] w-[45px]" viewBox="0 0 45 40" fill="#ea5504">
        <path d="M0 12h4v16H0zM8 12L45 0v40l-15-4v-2l-3 1-3 4-7-3-1-4-8-4z" />
      </svg>
      <Fit w={706} className="ml-[54px]">{"正规融资平台，安全有保障，点我查看>>"}</Fit>
      <span className="ml-[121px] h-[35px] w-[2px] bg-[#dc5a14]/70" />
      <svg className="ml-[17px] h-[32px] w-[32px]" viewBox="0 0 32 32" stroke="#dc5a14" strokeWidth="3.4">
        <path d="M1 1l30 30M31 1L1 31" />
      </svg>
    </section>
  );
}

function NavItem({ label, active = false, children }: { label: string; active?: boolean; children: ReactNode }) {
  return (
    <button className={`flex w-[201px] flex-col items-center pt-[8px] ${active ? "text-[#dc5a14]" : "text-[#666666]"}`}>
      <svg className="h-[60px] w-[66px]" viewBox="0 0 198 180" fill="none" stroke="currentColor" strokeWidth="9">
        {children}
      </svg>
      <span className="mt-[19px] text-[35px] leading-none">{label}</span>
    </button>
  );
}

function BottomNav() {
  return (
    <nav className="mt-[10px] flex h-[136px] border-t-2 border-[#d6d6d6] bg-[#f7f8fa]">
      <div className="w-[275px] leading-none">
        <Caret className="ml-[127px] mt-[8px] h-[8px] w-[22px] rotate-180 text-[#777777]" />
        <div className="mt-[7px] flex h-[52px] items-center pl-[68px] text-[40px] text-[#d03232]">
          <Fit w={142}>3889.35</Fit>
        </div>
        <div className="flex h-[46px] items-center pl-[41px] text-[37px] text-[#d03232]">
          <span className="text-[35px] text-[#666666]">上证</span>
          <Fit w={99} className="ml-[53px]">0.41%</Fit>
        </div>
      </div>
      <NavItem label="交易">
        <path d="M50 23A84 84 0 0 1 170 130l25-15M146 157A84 84 0 0 1 27 50L2 60" strokeLinejoin="round" />
        <path d="M69 55l30 28 30-28M99 83v55M67 85h64M67 111h64" />
      </NavItem>
      <NavItem label="发帖">
        <path d="M132 13H42q-22 0-22 22v108q0 22 22 22h112q22 0 22-22V60" />
        <path d="M150 37l14 14-74 70-18 8 7-19zM155 30l13 13q18-14 8-26-10-8-21 13z" fill="currentColor" stroke="none" />
      </NavItem>
      <NavItem label="功能">
        <rect x="24" y="18" width="66" height="66" rx="10" strokeWidth="8" />
        <rect x="24" y="98" width="66" height="66" rx="10" strokeWidth="8" />
        <rect x="106" y="98" width="66" height="66" rx="10" strokeWidth="8" />
        <rect x="113" y="23" width="54" height="54" rx="9" strokeWidth="8" transform="rotate(45 140 50)" />
      </NavItem>
      <NavItem label="加自选" active>
        <circle cx="99" cy="90" r="80" />
        <path d="M99 49v82M58 90h82" />
      </NavItem>
    </nav>
  );
}

export default function App() {
  return (
    <main className="h-[2175px] w-[1080px] overflow-hidden bg-white font-[Roboto,'Noto_Sans_CJK_SC',sans-serif]">
      <Header />
      <Quote />
      <Notice />
      <Tabs />
      <MaBar />
      {/* Charts and chip distribution */}
      <div className="flex pl-[12px]">
        <Charts />
        <ChipPanel />
      </div>
      <Banner />
      <BottomNav />
      <div className="h-[28px] bg-[#fcfcfc]" />
    </main>
  );
}
